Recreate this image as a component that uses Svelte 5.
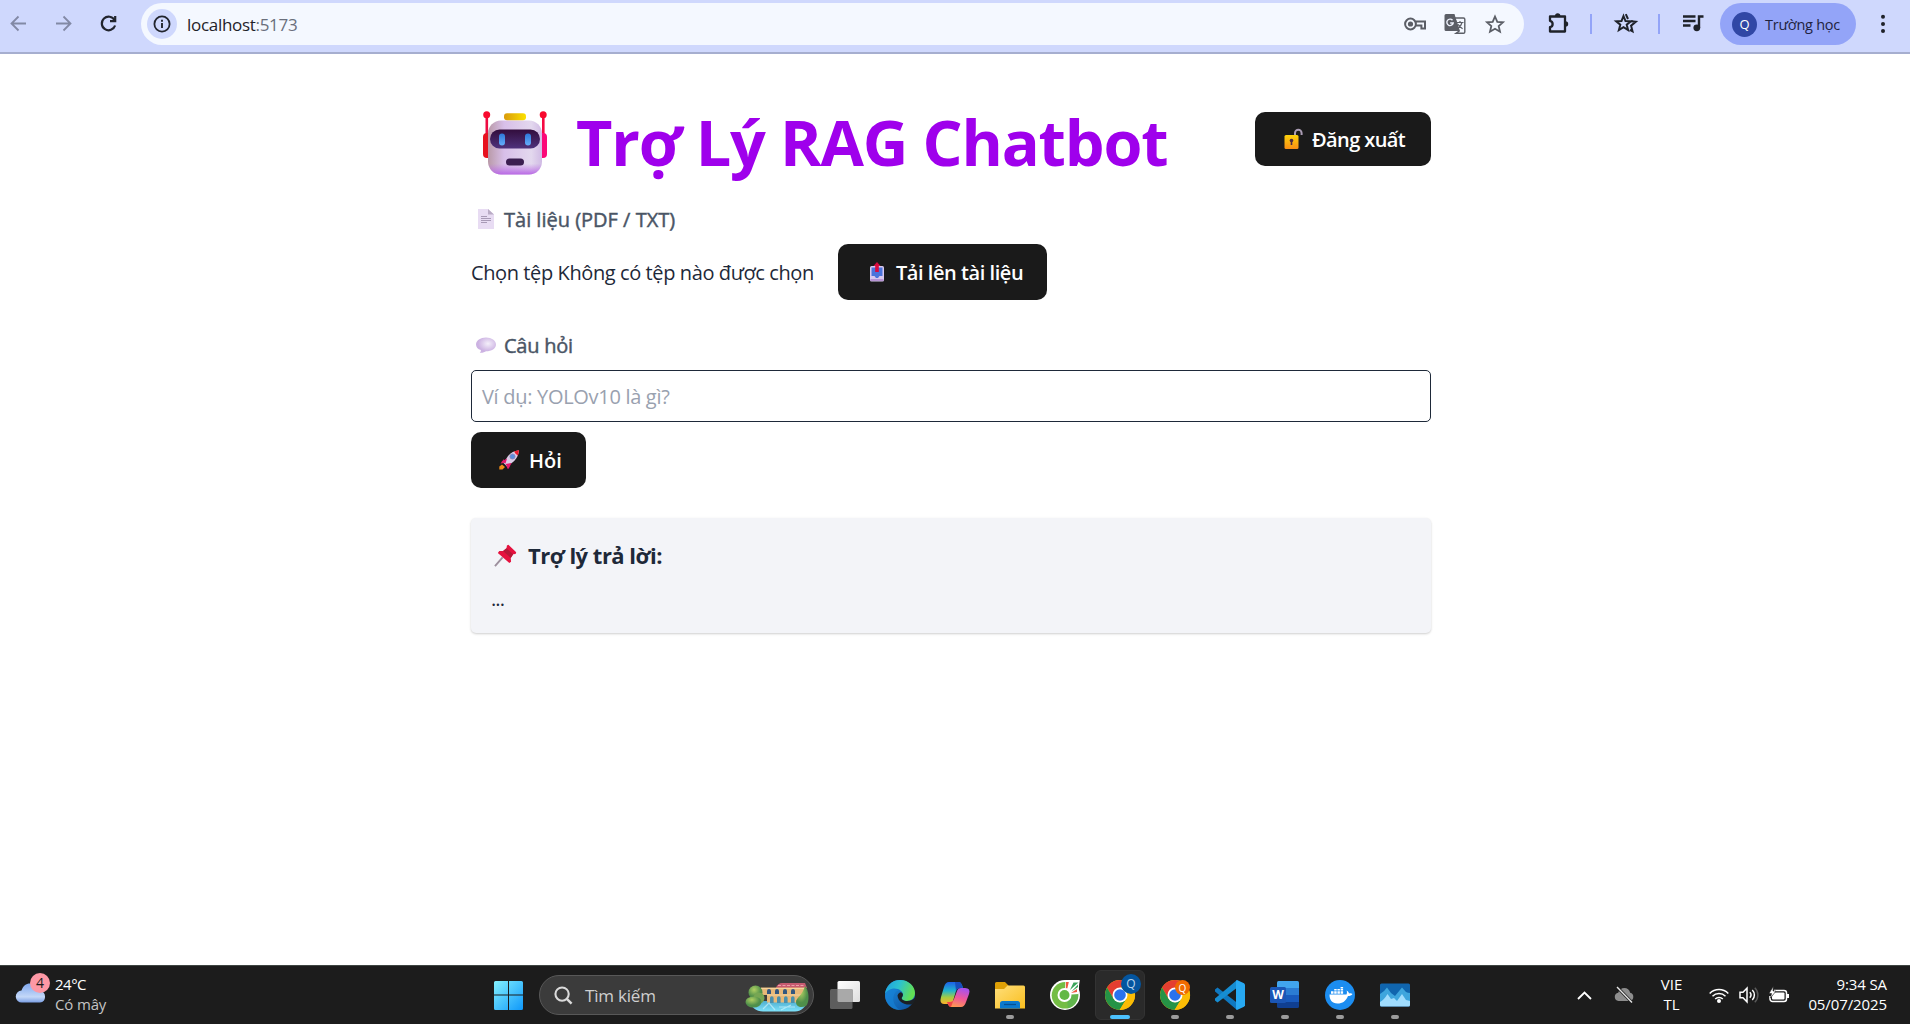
<script>
  let file = $state('Không có tệp nào được chọn');
  let question = $state('');
</script>

{#snippet chrome(label, kind)}
  <svg class="app-icon" viewBox="0 0 30 30">
    <circle cx="15" cy="15" r="15" fill="#fbbc05" />
    <path d="M2 7.5A15 15 0 0 1 28 7.5H15L8.5 18.8Z" fill="#e43e30" />
    <path d="M2 7.5 8.5 18.8 15 22.5 21.5 18.8 14.6 30A15 15 0 0 1 2 7.5Z" fill="#259346" />
    <path d="M15 7.5H28A15 15 0 0 1 14.6 30L21.5 18.8Z" fill="#fbbc05" />
    <circle cx="15" cy="15" r="7.5" fill="#fff" />
    <circle cx="15" cy="15" r="5.8" fill="#2b72ed" />
  </svg>
  <span class="app-badge {kind}">{label}</span>
{/snippet}

<div class="screen">
  <header class="toolbar">
    <svg class="nav dim" viewBox="0 0 25 25"><path d="M20 12.5H6M12.5 5.5l-7 7 7 7" /></svg>
    <svg class="nav dim" viewBox="0 0 25 25"><path d="M5 12.5h14M12.5 5.5l7 7-7 7" /></svg>
    <svg class="nav" viewBox="0 0 25 25"><path d="M18.6 9.2A6.8 6.8 0 1 0 19.1 14.5" /><path d="M19.2 5v5.2H14" /></svg>

    <div class="omnibox">
      <span class="info">
        <svg viewBox="0 0 18 18"><circle cx="9" cy="9" r="7.6" fill="none" stroke="#22252e" stroke-width="1.8" /><path d="M9 8v5M9 4.8v2" stroke="#22252e" stroke-width="1.9" /></svg>
      </span>
      <span class="url t">localhost<i>:5173</i></span>
      <div class="omni-icons">
        <svg viewBox="0 0 24 24" fill="none" stroke="#5b5e66" stroke-width="2"><circle cx="7.5" cy="12" r="5.4" /><circle cx="7.5" cy="12" r="2.6" fill="#5b5e66" stroke="none" /><path d="M12.5 9.6H22V16.6H18.4V13.6H12.5" /></svg>
        <svg viewBox="0 0 24 24"><path d="M3 2h8.500l5 17H3a1.500 1.500 0 0 1-1.500-1.500v-14A1.500 1.500 0 0 1 3 2Z" fill="#5b5e66" /><path d="M11.800 6H20.500a1.300 1.300 0 0 1 1.300 1.300V20a1.300 1.300 0 0 1-1.300 1.300H13L16.200 19Z" fill="none" stroke="#5b5e66" stroke-width="1.400" /><path d="M9.500 8.300A3.200 3.200 0 1 0 10.200 11H7.200" fill="none" stroke="#eef2fd" stroke-width="1.400" /><path d="M13.800 10.500H20.500M17 9v1.500M19 10.500c-.7 2.800-2.300 4.800-4 6M15 12.300c1 2 2.600 3.300 4.600 4.500" fill="none" stroke="#5b5e66" stroke-width="1.200" /></svg>
        <svg viewBox="0 0 24 24" fill="none" stroke="#5b5e66" stroke-width="1.800"><path d="M12 4.500 14.300 9.800 20 10.300 15.700 14.100 17 19.700 12 16.700 7 19.700 8.300 14.100 4 10.300 9.700 9.800Z" /></svg>
      </div>
    </div>

    <svg class="ext" viewBox="0 0 24 24"><path d="M3 5.500H18V20.500H3V16.200C6.500 15.500 6.500 10.500 3 9.800Z" fill="none" stroke="#1f2229" stroke-width="2.300" stroke-linejoin="round" /><path d="M8 5a2.700 2.700 0 0 1 5.400 0ZM18.500 10.200a2.700 2.700 0 0 1 0 5.400Z" fill="#1f2229" /></svg>
    <span class="sep"></span>
    <svg class="fav" viewBox="0 0 24 24" fill="none" stroke="#1f2229" stroke-width="2"><path d="M9.500 5 11.500 10 16.800 10.300 12.700 13.700 14.100 19 9.500 16.100 4.900 19 6.300 13.700 2.200 10.300 7.500 10Z" /><path d="M11.800 3.200 14 8M17 10.200 21.800 10.700 17.100 14.700 18.500 20.300 15.800 18.800" /></svg>
    <span class="sep second"></span>
    <svg class="music" viewBox="0 0 24 24"><path d="M2 5.500H14.500M2 10H14.500M2 14.500H9.500" stroke="#1f2229" stroke-width="2.300" /><path d="M18 17V5.500H22.500" fill="none" stroke="#1f2229" stroke-width="2.400" /><circle cx="15.800" cy="16.800" r="3.400" fill="#1f2229" /></svg>
    <div class="profile"><span class="avatar">Q</span><span class="t school">Trường học</span></div>
    <svg class="dots" viewBox="0 0 12 24"><circle cx="6" cy="4.700" r="2" /><circle cx="6" cy="12" r="2" /><circle cx="6" cy="19" r="2" /></svg>
  </header>

  <main>
    <div class="title-row">
      <svg class="robot" viewBox="0 0 64 64">
        <defs>
          <linearGradient id="face" x1="0" x2="1"><stop offset="0" stop-color="#b99aa8" /><stop offset=".3" stop-color="#d8bfe9" /><stop offset=".8" stop-color="#e3d8ee" /><stop offset="1" stop-color="#d0bbe4" /></linearGradient>
          <linearGradient id="chin" x1="0" y1="0" x2="0" y2="1"><stop offset=".8" stop-color="#bf78e6" stop-opacity="0" /><stop offset="1" stop-color="#b968e5" /></linearGradient>
          <linearGradient id="visor" x1="0" y1="0" x2="0" y2="1"><stop offset="0" stop-color="#320d3c" /><stop offset="1" stop-color="#4f327c" /></linearGradient>
          <linearGradient id="gold"><stop offset="0" stop-color="#d99a0c" /><stop offset="1" stop-color="#fbe100" /></linearGradient>
          <linearGradient id="eye" x1="0" y1="0" x2="0" y2="1"><stop offset="0" stop-color="#2e77d8" /><stop offset="1" stop-color="#65aefb" /></linearGradient>
        </defs>
        <rect x="2.500" y="5" width="2.600" height="22" fill="#ee0b42" /><rect x="59" y="5" width="2.600" height="22" fill="#f50a42" />
        <rect x="0" y="22" width="10" height="25" rx="4" fill="#e7121f" /><rect x="54" y="22" width="10" height="25" rx="4" fill="#fb0878" />
        <circle cx="3.700" cy="3.700" r="3.500" fill="#f8092e" /><circle cx="60.200" cy="3.700" r="3.500" fill="#f8092e" />
        <rect x="5" y="9.500" width="54" height="54" rx="13" fill="url(#face)" /><rect x="5" y="9.500" width="54" height="54" rx="13" fill="url(#chin)" />
        <rect x="21" y="2.300" width="22" height="7" rx="3" fill="url(#gold)" />
        <rect x="7" y="18.500" width="50" height="19" rx="9.500" fill="url(#visor)" />
        <rect x="16" y="22.500" width="6" height="12" rx="3" fill="url(#eye)" /><rect x="42" y="22.500" width="6" height="12" rx="3" fill="url(#eye)" />
        <rect x="23" y="47.500" width="18" height="7" rx="3.500" fill="#3b1e50" />
      </svg>
      <h1 class="t">Trợ Lý RAG Chatbot</h1>
      <button class="logout">
        <svg viewBox="0 0 20 20"><defs><linearGradient id="lock" x1="0" y1="0" x2="0" y2="1"><stop offset="0" stop-color="#fcd20b" /><stop offset="1" stop-color="#f98d15" /></linearGradient></defs><path d="M12 7V4a3.300 3.300 0 0 1 6.600 0V6" fill="none" stroke="#aa9cb4" stroke-width="2" /><rect x="1.500" y="6" width="14" height="14" rx="1.500" fill="url(#lock)" /><circle cx="8.500" cy="11.500" r="1.800" fill="#4c2a42" /><path d="M7.700 12h1.600v4H7.700Z" fill="#4c2a42" /></svg>
        <span class="t">Đăng xuất</span>
      </button>
    </div>

    <div class="label doc">
      <svg viewBox="0 0 20 20"><path d="M2 0H12L18 5.500V20H2Z" fill="#e8dcf3" /><path d="M12 0 18 5.500H12Z" fill="#b9abc5" /><path d="M5 7.500H11M5 9.500H15M5 11.500H15M5 13.500H11" stroke="#a89ab6" stroke-width="1" /></svg>
      <span class="t">Tài liệu (PDF / TXT)</span>
    </div>
    <div class="file-row">
      <span class="file t">Chọn tệp {file}</span>
      <button class="upload">
        <svg viewBox="0 0 20 20"><rect x="3" y="4" width="14" height="15.500" rx="1.500" fill="#d8c8ef" /><path d="M4.500 5.500H15.500V14H12.500L11 16H9L7.500 14H4.500Z" fill="#4b73db" /><path d="M3.500 18H16.500" stroke="#ac83cb" stroke-width="1.500" /><path d="M10 0 13.500 4H11.800V10H8.200V4H6.500Z" fill="#d80b3f" /></svg>
        <span class="t">Tải lên tài liệu</span>
      </button>
    </div>

    <div class="label ask-label">
      <svg viewBox="0 0 20 20"><defs><radialGradient id="talk" cx=".6" cy=".4"><stop offset="0" stop-color="#f4effa" /><stop offset="1" stop-color="#ccb2e2" /></radialGradient></defs><path d="M10 2.500c5.500 0 10 3 10 7s-4.500 6.800-10 6.800c-1.200 1-3.500 1.700-6.200 1.500.9-.8 1.300-1.700 1-2.700C1.800 14.200 0 12 0 9.500c0-4 4.500-7 10-7Z" fill="url(#talk)" /></svg>
      <span class="t">Câu hỏi</span>
    </div>
    <div class="field"><input bind:value={question} /> {#if !question}<span class="hint t">Ví dụ: YOLOv10 là gì?</span>{/if}</div>
    <button class="ask">
      <svg viewBox="0 0 20 20"><path d="M5 9 1.500 13.500 5 13ZM11 15 8.500 19 7.500 15.500Z" fill="#e0245e" /><path d="M4.500 13 9 6C12 2.500 15 1 20 .3 19.500 5 18 8.500 14 12L8 16.500Z" fill="#dccde8" /><path d="M15 1.500 20 0 19 5.500Q16.500 4.500 15 1.500Z" fill="#ee1a2c" /><circle cx="13.500" cy="6.500" r="2.600" fill="#5a8fe0" stroke="#9185b5" stroke-width=".8" /><path d="M2.500 11.500 8 8.500 6.500 13.500ZM6.500 14 12.500 13 9.500 19Z" fill="#e5186b" /><path d="M3 14.500 6 17 3.500 19.500H.3V16.500Z" fill="#f28c17" /></svg>
      <span class="t">Hỏi</span>
    </button>

    <section class="answer">
      <h2>
        <svg viewBox="0 0 24 24"><path d="M1 23 9 14" stroke="#9c8f9d" stroke-width="2" /><path d="M13.500 1.500 15 .8 23.200 8.500 22.500 10.500 20 10.800 17.500 14.500 17.800 18.500 16 19.800 4 9.300 5.500 7.300 9.500 7.200 13 4.500Z" fill="#e5123f" /><path d="M13 4.500 20 10.800 17.500 14.500 9.500 7.200Z" fill="#b61838" /></svg>
        <span class="t">Trợ lý trả lời:</span>
      </h2>
      <p class="t">...</p>
    </section>
  </main>

  <footer class="taskbar">
    <div class="weather">
      <div class="cloud-wrap">
        <svg viewBox="0 0 30 22"><defs><linearGradient id="cl" x1="0" y1="0" x2="0" y2="1"><stop offset="0" stop-color="#7fa8ee" /><stop offset=".7" stop-color="#c4d8f8" /><stop offset="1" stop-color="#7b9fe4" /></linearGradient></defs><path d="M6 20.500a6 6 0 0 1-.5-12C7 4 10 1.500 14 1.500c5 0 8 3.500 8.500 7.500h1.500a5.800 5.800 0 0 1 0 11.500Z" fill="url(#cl)" /></svg>
        <span class="alert">4</span>
      </div>
      <div class="weather-text"><span class="t temp">24°C</span><span class="t soft">Có mây</span></div>
    </div>

    <div class="apps">
      <svg class="app-icon" viewBox="0 0 30 30"><defs><linearGradient id="win" x1="0" y1="0" x2="1" y2="1"><stop offset="0" stop-color="#84f1ff" /><stop offset="1" stop-color="#0f98fa" /></linearGradient></defs><path d="M1.500 1H14V14.500H0V2.500A1.500 1.500 0 0 1 1.500 1ZM15 1h12.500A1.500 1.500 0 0 1 29 2.500v12H15ZM0 15.500H14V30H1.500A1.500 1.500 0 0 1 0 28.500ZM15 15.500H29v13a1.500 1.500 0 0 1-1.500 1.500H15Z" fill="url(#win)" /></svg>
      <div class="search">
        <svg class="lens" viewBox="0 0 20 20" fill="none" stroke="#dadada" stroke-width="2.200"><circle cx="8.500" cy="8.500" r="7" /><path d="M13.500 13.500 18.500 18.500" stroke-width="2.600" /></svg>
        <span class="t">Tìm kiếm</span>
        <svg class="scene" viewBox="0 0 64 30">
          <defs><linearGradient id="water" x1="0" y1="0" x2="0" y2="1"><stop offset="0" stop-color="#4faed0" /><stop offset="1" stop-color="#7de2fb" /></linearGradient><radialGradient id="tree" cx=".4" cy=".3"><stop offset="0" stop-color="#b0cf62" /><stop offset="1" stop-color="#4f8f4a" /></radialGradient></defs>
          <path d="M4 19H62C61 25 56 29.500 50 29.500H18C11 29.500 6 25 4 19Z" fill="url(#water)" />
          <path d="M31 5.500Q33 1 37 1H60L62 6H31Z" fill="#c65a70" /><path d="M33 3.500H60" stroke="#eda0a8" stroke-width="1" stroke-dasharray="3 1.500" />
          <path d="M16 5.500H61V13H57V20.500H22V13H16Z" fill="#e8b878" /><path d="M16 6.500H60M22 13H57" stroke="#f3d29c" />
          <path d="M22 12V9a2 2 0 0 1 4 0v3ZM30 12V9a2 2 0 0 1 4 0v3ZM38 12V9a2 2 0 0 1 4 0v3ZM46 12V9a2 2 0 0 1 4 0v3Z" fill="#33577f" /><path d="M25 21v-5a1.800 1.800 0 0 1 3.600 0v5ZM32 21v-5a1.800 1.800 0 0 1 3.600 0v5ZM39 21v-5a1.800 1.800 0 0 1 3.600 0v5ZM46 21v-5a1.800 1.800 0 0 1 3.600 0v5Z" fill="#4a90ae" />
          <path d="M18 27 24 21 30 28M34 25H50M36 28 46 23" stroke="#d7f7ff" stroke-width="1.200" fill="none" opacity=".6" />
          <circle cx="10.500" cy="10.500" r="7" fill="url(#tree)" /><circle cx="14" cy="16" r="5.500" fill="#77a653" /><ellipse cx="8.500" cy="20" rx="8" ry="5.500" fill="url(#tree)" />
          <path d="M60 4C64 8 65 20 61 24 56 26 51 25 51 20 51 16 57 14 60 4Z" fill="url(#tree)" />
        </svg>
      </div>
      <svg class="app-icon" viewBox="0 0 30 30"><defs><linearGradient id="tv" x1="0" y1="0" x2="1" y2="1"><stop offset="0" stop-color="#fff" /><stop offset="1" stop-color="#dedede" /></linearGradient></defs><rect x="7.500" y="1" width="22.500" height="21" rx="1.500" fill="url(#tv)" /><rect x="0" y="9" width="22.500" height="20" rx="1.500" fill="#5d5d5d" /><path d="M7.500 9H22.500V22H9A1.500 1.500 0 0 1 7.500 20.500Z" fill="#a9a9a9" /></svg>
      <svg class="app-icon" viewBox="0 0 30 30"><defs><linearGradient id="e1" x1="0" y1="0" x2="1" y2=".3"><stop offset="0" stop-color="#1c9de2" /><stop offset=".5" stop-color="#2cc2cf" /><stop offset="1" stop-color="#61df55" /></linearGradient><linearGradient id="e2" x1="0" y1="0" x2="1" y2="1"><stop offset="0" stop-color="#1d8fe0" /><stop offset="1" stop-color="#0c4f9e" /></linearGradient></defs><circle cx="15" cy="15" r="15" fill="url(#e2)" /><path d="M0 14C1 6 7 0 15 0c9 0 15 6.500 15 13 0 5-3.500 8-8 8-3.500 0-5.500-1.200-5.500-2.500 0-1 1.500-1.500 1.500-4C18 11.500 14 8.500 9.500 8.500 5 8.500 1.500 11 0 14Z" fill="url(#e1)" /><path d="M12.500 15.500C13 13.500 14.500 12.500 16 12.300 18.500 13.500 18.300 15.500 17 17.200 15.800 18.800 18.500 21 22 21 26 21 28.500 19.500 30.300 17L30.300 20 27.500 24C22 26 13 23 12.500 15.500Z" fill="#1b2025" /><path d="M11 11.500C6 17 8 26 15 30 5 30 0 22 0 15 2 10 8 8 14 10Z" fill="#1684d8" opacity=".6" /></svg>
      <svg class="app-icon" viewBox="0 0 30 30"><defs><linearGradient id="c1" x1="0" y1="0" x2="0" y2="1"><stop offset="0" stop-color="#1d5fe8" /><stop offset=".4" stop-color="#20b5cd" /><stop offset=".7" stop-color="#a6cc42" /><stop offset="1" stop-color="#ffb12a" /></linearGradient><linearGradient id="c2" x1=".6" y1="0" x2=".3" y2="1"><stop offset="0" stop-color="#a851ee" /><stop offset=".5" stop-color="#f0579a" /><stop offset="1" stop-color="#ff9a4e" /></linearGradient></defs><path d="M9 2H19Q21 2 22 5L23 8H20Q17 8 16 11L13 21Q12 24 9 24H4Q-1 24 1 17L4 7Q5.500 2 9 2Z" fill="url(#c1)" /><path d="M15 2H19Q21 2 22 5L23 8H20Q17 8 16 11Z" fill="#174dbc" /><path d="M21 27H11Q9 27 8 24L7 22H10Q13 22 14 19L17 11Q18 8 21 8H25Q31 8 29 14L26 22Q24.500 27 21 27Z" fill="url(#c2)" /><path d="M7 22H10Q13 22 13.500 20L11 27Q9 27 8 24.500Z" fill="#f04545" /></svg>
      <div class="app"><svg class="app-icon" viewBox="0 0 30 30"><defs><linearGradient id="fo" x1="0" y1="0" x2="1" y2="1"><stop offset="0" stop-color="#ffdf7b" /><stop offset="1" stop-color="#f9be1e" /></linearGradient></defs><path d="M0 3.500A1.500 1.500 0 0 1 1.500 2H10L13.500 5.500V9H0Z" fill="#dea006" /><path d="M0 9H9L12.500 5.500H28.500A1.500 1.500 0 0 1 30 7V28.500H0Z" fill="url(#fo)" /><path d="M5 28.500V23.500A2.500 2.500 0 0 1 7.500 21H22.500A2.500 2.500 0 0 1 25 23.500V28.500Z" fill="#0a79cd" /><path d="M9 24.500H21" stroke="#055093" stroke-width="1.300" /></svg><i class="run"></i></div>
      <svg class="app-icon" viewBox="0 0 30 30"><circle cx="15" cy="15" r="15" fill="#fff" /><path d="M16 0H29.500L28 12H17Z" fill="#fff" /><circle cx="15" cy="15.300" r="13.300" fill="#74bd44" /><path d="M15 2V15.300L28.300 14A13.300 13.300 0 0 1 18 28Z" fill="#4dae55" opacity=".5" /><path d="M14.500 15 15.500 0H29.500L28.500 14Z" fill="#fff" /><path d="M16 2H18.800L17.300 8.500H15.800ZM21 13 27 9V12Z" fill="#ee5a41" /><path d="M20 10 23.500 2.500H28.500ZM21.500 11.500 28 4.500V7Z" fill="#3ba55c" /><circle cx="14.500" cy="15" r="7" fill="#fff" /><circle cx="14.500" cy="15" r="5" fill="#62b845" /></svg>
      <div class="app active">{@render chrome('Q', 'blue')}<i class="run on"></i></div>
      <div class="app">{@render chrome('Q', 'orange')}<i class="run"></i></div>
      <div class="app"><svg class="app-icon" viewBox="0 0 30 30"><path d="M0 9.500 2.500 7.500 23 23.500 22 30 0 11.500Z" fill="#0f78c0" /><path d="M0 20.500 2.500 22.500 23 7 22 0 0 18.500Z" fill="#168dd2" /><path d="M22 0 29 3.200 30 4.500V25.500L29 26.800 22 30 21 29V1Z" fill="#27a9f2" /></svg><i class="run"></i></div>
      <div class="app"><svg class="app-icon" viewBox="0 0 30 30"><path d="M8.500 1H27.500A1.500 1.500 0 0 1 29 2.500V8H7V2.500A1.500 1.500 0 0 1 8.500 1Z" fill="#41a5ee" /><path d="M7 8H29V15H7Z" fill="#2b7cd3" /><path d="M7 15H29V22H7Z" fill="#185abd" /><path d="M7 22H29V26.500A1.500 1.500 0 0 1 27.500 28H8.500A1.500 1.500 0 0 1 7 26.500Z" fill="#103f91" /><rect x="0" y="7" width="16" height="16" rx="1.500" fill="#1b56b5" /></svg><b class="word">W</b><i class="run"></i></div>
      <div class="app"><svg class="app-icon" viewBox="0 0 30 30"><circle cx="15" cy="15" r="15" fill="#1c8df0" /><path d="M4.500 14.500H21.500C22.300 12.800 22 11.500 21.500 10.500 23.500 11.300 23.800 12.500 24 13.500 25.500 13.200 26.500 13.300 27.500 14 26.500 15.500 25 16 23 16 21 21 17.500 23.500 12.500 23.500 7 23.500 4.300 19.500 4.500 14.500Z" fill="#fff" /><path d="M6 11.200h2.500v2.500H6ZM9.200 11.200h2.500v2.500H9.200ZM12.400 11.200h2.500v2.500h-2.500ZM15.600 11.200h2.500v2.500h-2.500ZM9.200 9h2.500v1.600H9.200ZM12.400 9h2.500v1.600h-2.500ZM15.600 9h2.500v1.600h-2.500ZM15.600 7h2.500v1.400h-2.500Z" fill="#fff" /></svg><i class="run"></i></div>
      <div class="app"><svg class="app-icon" viewBox="0 0 30 30"><rect y="3.500" width="30" height="23" rx="1.500" fill="#1065ae" /><path d="M0 14Q4 12 7 7.500L11 13 15 16 22 7.500 26 12Q28 13 30 13V25H0Z" fill="#3ea5dd" /><path d="M0 22Q4 20 7.500 14L11 19 14 18 17 21 22 14 26 20 30 21V25A1.500 1.500 0 0 1 28.500 26.500H1.500A1.500 1.500 0 0 1 0 25Z" fill="#a0dcfd" /></svg><i class="run"></i></div>
    </div>

    <div class="tray">
      <svg class="chev" viewBox="0 0 15 9"><path d="M1 8 7.500 1.500 14 8" fill="none" stroke="#fff" stroke-width="1.800" /></svg>
      <svg class="offline" viewBox="0 0 20 16"><path d="M4.500 14a4.200 4.200 0 0 1-.3-8.300C5.300 2.500 7.500 1 10.300 1c3 0 5.200 2 5.900 4.800A4.200 4.200 0 0 1 15.800 14Z" fill="#8d8d8d" /><path d="M3 0 18 15.500" stroke="#1c1c1c" stroke-width="3" /><path d="M3 0 18 15.500" stroke="#e6e6e6" stroke-width="1.400" /></svg>
      <div class="lang"><span class="t">VIE</span><span class="t">TL</span></div>
      <svg class="wifi" viewBox="0 0 20 16" fill="none" stroke="#fff" stroke-width="1.500"><path d="M.7 6.500A13 13 0 0 1 19.300 6.500M3.500 9.300a9.200 9.200 0 0 1 13 0M6.200 12a5.400 5.400 0 0 1 7.600 0" /><circle cx="10" cy="14" r="2" fill="#fff" stroke="none" /></svg>
      <svg class="vol" viewBox="0 0 20 18" fill="none" stroke="#fff" stroke-width="1.500"><path d="M1 6.300H4L8 2.200V15.800L4 11.700H1Z" /><path d="M10.800 6.300a4 4 0 0 1 0 5.400M13.300 4a7 7 0 0 1 0 10" /><path d="M15.800 1.800a10 10 0 0 1 0 14.400" stroke="#5a5a5a" /></svg>
      <svg class="bat" viewBox="0 0 20 16"><path d="M5 3.500H15A2.500 2.500 0 0 1 17.500 6v6a2.500 2.500 0 0 1-2.500 2.500H3.500A2.500 2.500 0 0 1 1 12V9" fill="none" stroke="#fff" stroke-width="1.500" /><rect x="3" y="5.500" width="12.500" height="7" rx="1" fill="#fff" /><path d="M18 7h2v4h-2Z" fill="#fff" /><path d="M4.200-.5 0 6.500H2.500L1.500 11 7 4H4Z" fill="#fff" stroke="#1c1c1c" stroke-width=".6" /></svg>
      <div class="clock"><span class="t">9:34 SA</span><span class="t">05/07/2025</span></div>
    </div>
  </footer>
</div>

<style>
  :global(body) { background: #fff; }
  .screen { width: 1910px; height: 1024px; display: flex; flex-direction: column; overflow: hidden; font-family: 'Open Sans', 'Noto Sans', sans-serif; color: #1e2939; }
  svg { display: block; flex: none; overflow: visible; }
  .t { white-space: nowrap; }
  button { border: 0; font-family: inherit; cursor: pointer; }

  .toolbar { box-sizing: border-box; height: 54px; flex: none; display: flex; align-items: flex-start; padding: 3px 21px 0 6px; background: #cfd8fd; border-bottom: 2px solid #a6aecf; }
  .nav { width: 25px; height: 25px; margin: 8px 20px 0 0; fill: none; stroke: #22252e; stroke-width: 2.2; }
  .nav.dim { stroke: #8289a5; stroke-width: 1.8; }
  .omnibox { flex: 1; height: 42px; box-sizing: border-box; border-radius: 21px; background: #f4f8ff; display: flex; align-items: center; padding: 0 17px 0 6px; }
  .info { width: 30px; height: 30px; border-radius: 50%; background: #cfd8fd; display: grid; place-items: center; margin-right: 10px; }
  .info svg { width: 18px; height: 18px; }
  .url { font-size: 17px; line-height: 24px; letter-spacing: -0.3px; padding-top: 1px; color: #1f2229; }
  .url i { font-style: normal; color: #6a6f7c; }
  .omni-icons { margin-left: auto; display: flex; gap: 16px; }
  .omni-icons svg { width: 24px; height: 24px; }
  .ext { width: 24px; height: 24px; margin: 8px 19px 0 23px; }
  .sep { width: 2px; height: 20px; background: #93a4f8; margin: 11px 22px 0 0; }
  .fav { width: 24px; height: 24px; margin: 8px 20px 0 0; }
  .sep.second { margin-right: 21px; }
  .music { width: 24px; height: 24px; margin: 8px 15px 0 0; }
  .profile { box-sizing: border-box; width: 136px; height: 42px; border-radius: 21px; background: #93a4f8; display: flex; align-items: center; padding-left: 12px; gap: 8px; font-size: 14.5px; letter-spacing: -0.25px; color: #1f2340; }
  .avatar { width: 25px; height: 25px; border-radius: 50%; background: #3147a5; color: #fff; font-size: 13px; display: grid; place-items: center; }
  .dots { width: 12px; height: 24px; margin: 9px 0 0 21px; fill: #1f2229; }

  main { flex: 1; width: 960px; margin-left: 471px; padding-top: 45px; box-sizing: border-box; display: flex; flex-direction: column; align-items: flex-start; font-size: 20px; line-height: 30px; }
  .title-row { width: 960px; height: 80px; display: flex; align-items: center; }
  .robot { width: 64px; height: 64px; margin: 7px 29px 0 12px; }
  h1 { margin: 5px 0 0; font-size: 63px; line-height: 80px; font-weight: 700; letter-spacing: -1.15px; color: #9f00ec; }
  button { background: #1a1a1a; color: #fff; border-radius: 10px; height: 56px; display: flex; align-items: center; font-size: 20px; font-weight: 600; line-height: 30px; padding: 0; }
  button .t, .label .t, .file, .hint { padding-top: 2px; }
  button svg { width: 20px; height: 20px; margin-right: 9px; }
  .logout { margin-left: auto; width: 176px; height: 54px; padding-left: 28px; letter-spacing: -0.6px; }
  .label { display: flex; align-items: center; gap: 8px; padding-left: 5px; height: 30px; color: #4a5565; -webkit-text-stroke: 0.45px #4a5565; }
  .label svg { width: 20px; height: 20px; }
  .doc { margin-top: 25px; }
  .file { letter-spacing: -0.4px; }
  .file-row { margin-top: 10px; display: flex; align-items: center; justify-content: space-between; width: 576px; height: 56px; }
  .upload { width: 209px; padding-left: 29px; letter-spacing: -0.45px; }
  .ask-label { margin-top: 30px; letter-spacing: -0.25px; }
  .field { margin-top: 10px; width: 960px; height: 52px; box-sizing: border-box; border: 1px solid #1e2939; border-radius: 5px; display: grid; align-items: center; }
  .field > * { grid-area: 1 / 1; }
  input { width: 100%; height: 50px; box-sizing: border-box; border: 0; outline: 0; background: none; padding: 0 10px; font: inherit; color: inherit; }
  .hint { padding-left: 10px; justify-self: start; letter-spacing: -0.3px; color: #99a1af; pointer-events: none; }
  .ask { margin-top: 10px; width: 115px; padding-left: 28px; }
  .ask svg { margin-right: 10px; }
  .answer { margin-top: 30px; width: 960px; height: 115px; box-sizing: border-box; border-radius: 5px; background: #f3f4f8; box-shadow: 0 1px 3px rgba(0, 0, 0, .1), 0 1px 2px rgba(0, 0, 0, .1); padding: 20px; }
  h2 { margin: 0; display: flex; align-items: center; gap: 11px; padding-left: 3px; font-size: 22px; line-height: 35px; font-weight: 700; letter-spacing: -0.5px; }
  h2 svg { width: 23px; height: 23px; }
  p { margin: 11px 0 0; letter-spacing: -0.9px; }

  .taskbar { flex: none; height: 59px; box-sizing: border-box; border-top: 1px solid #3e4542; background: #1c1c1c; display: flex; align-items: center; color: #fff; font-size: 15px; line-height: 20px; }
  .weather { width: 494px; box-sizing: border-box; padding-left: 16px; display: flex; align-items: center; gap: 9px; }
  .cloud-wrap { position: relative; width: 30px; height: 30px; display: flex; align-items: flex-end; }
  .cloud-wrap svg { width: 30px; height: 22px; margin-bottom: 6px; }
  .alert { position: absolute; left: 14px; top: -7px; width: 20px; height: 20px; border-radius: 50%; background: #fd98a5; color: #1c1c1c; display: grid; place-items: center; font-size: 14px; }
  .weather-text, .lang, .clock { display: flex; flex-direction: column; padding-bottom: 2px; }
  .temp { letter-spacing: -0.5px; }
  .soft { color: #c4c4c4; letter-spacing: -0.15px; }
  .apps { display: flex; align-items: center; gap: 25px; }
  .app-icon { width: 30px; height: 30px; }
  .search { box-sizing: border-box; width: 275px; height: 40px; margin: 0 -9px 0 -10px; border: 1px solid #585858; border-radius: 20px; background: #3b3b3b; display: flex; align-items: center; padding: 0 4px 0 14px; font-size: 17px; letter-spacing: -0.2px; color: #cfcfcf; }
  .search .t { padding-top: 1px; }
  .lens { width: 19px; height: 19px; margin-right: 12px; }
  .scene { width: 64px; height: 30px; margin: 4px 0 0 auto; }
  .app { position: relative; width: 30px; height: 30px; }
  .active::before { content: ''; position: absolute; inset: -10px; border-radius: 6px; background: #2a2a2a; border: 1px solid #333; box-sizing: border-box; }
  .active .app-icon { position: relative; }
  .run { position: absolute; left: 11px; top: 35px; width: 8px; height: 4px; border-radius: 2px; background: #9b9b9b; }
  .run.on { left: 5px; width: 20px; background: #4cc2ff; }
  .app-badge { position: absolute; border-radius: 50%; color: #fff; display: grid; place-items: center; line-height: 1; }
  .blue { left: 16px; top: -6px; width: 20px; height: 20px; background: #04559f; color: #b9d3ea; font-size: 12px; }
  .orange { left: 15px; top: 0; width: 15px; height: 15px; background: #f06a00; font-size: 10px; }
  .word { position: absolute; left: 0; top: 7px; width: 16px; height: 16px; display: grid; place-items: center; font-size: 12px; line-height: 16px; }
  .tray { flex: 1; display: flex; align-items: center; justify-content: flex-end; padding-right: 23px; }
  .chev { width: 15px; height: 9px; margin-right: 22px; }
  .offline { width: 20px; height: 16px; margin-right: 20px; }
  .lang { width: 35px; align-items: center; margin-right: 20px; }
  .wifi { width: 20px; height: 16px; margin-right: 10px; }
  .vol { width: 20px; height: 18px; margin-right: 10px; }
  .bat { width: 20px; height: 16px; }
  .clock { width: 98px; align-items: flex-end; letter-spacing: -0.1px; }
</style>
